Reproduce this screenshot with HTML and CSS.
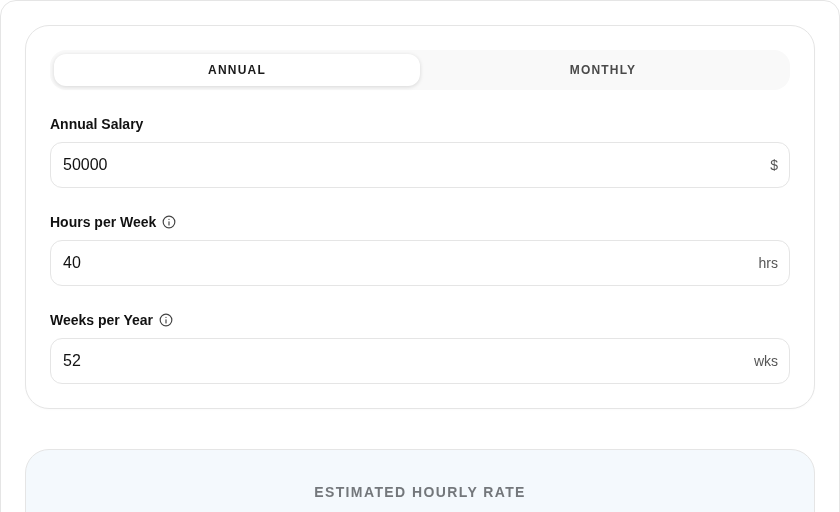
FILE: index.html
```html
<!DOCTYPE html>
<html lang="en">
<head>
<meta charset="utf-8">
<title>Hourly Rate Calculator</title>
<link rel="stylesheet" href="styles.css">
</head>
<body>
<main class="shell">
  <section class="card">
    <div class="toggle">
      <button class="tab tab-active" type="button">ANNUAL</button>
      <button class="tab" type="button">MONTHLY</button>
    </div>
    <div class="field">
      <label class="label">Annual Salary</label>
      <div class="input"><span class="value">50000</span><span class="unit">$</span></div>
    </div>
    <div class="field">
      <label class="label">Hours per Week
        <svg class="info" viewBox="0 0 24 24" aria-hidden="true"><circle cx="12" cy="12" r="10"/><path d="M12 17v-5.5"/><path d="M12 7.5h.01"/></svg>
      </label>
      <div class="input"><span class="value">40</span><span class="unit">hrs</span></div>
    </div>
    <div class="field">
      <label class="label">Weeks per Year
        <svg class="info" viewBox="0 0 24 24" aria-hidden="true"><circle cx="12" cy="12" r="10"/><path d="M12 17v-5.5"/><path d="M12 7.5h.01"/></svg>
      </label>
      <div class="input"><span class="value">52</span><span class="unit">wks</span></div>
    </div>
  </section>
  <section class="result">
    <h2 class="result-title">ESTIMATED HOURLY RATE</h2>
  </section>
</main>
</body>
</html>
```
FILE: styles.css
```css
* { box-sizing: border-box; }
html, body { margin: 0; height: 512px; overflow: hidden; background: #fff; }
body {
  font-family: "Liberation Sans", Arial, sans-serif;
  color: #111;
}
.shell {
  border: 1px solid #e5e5e5;
  border-radius: 16px;
  padding: 24px;
  min-height: 700px;
  background: #fff;
  will-change: transform;
}
.card {
  border: 1px solid #e5e5e5;
  border-radius: 24px;
  padding: 24px;
  background: #fff;
  box-shadow: 0 1px 2px rgba(0,0,0,0.02);
}
.toggle {
  display: flex;
  height: 40px;
  padding: 4px;
  border-radius: 16px;
  background: #f9f9f9;
  margin-bottom: 24px;
}
.tab {
  flex: 1;
  border: 0;
  background: transparent;
  border-radius: 12px;
  font: 700 12px "Liberation Sans", Arial, sans-serif;
  letter-spacing: 1.2px;
  color: #4a4a4a;
  padding: 0;
}
.tab-active {
  background: #fff;
  color: #1a1a1a;
  box-shadow: 0 1px 4px rgba(0,0,0,0.14);
}
.field { margin-bottom: 24px; }
.field:last-child { margin-bottom: 0; }
.label {
  display: flex;
  align-items: center;
  gap: 6px;
  height: 20px;
  margin-bottom: 8px;
  font-size: 14px;
  font-weight: 700;
  line-height: 20px;
  color: #111;
}
.info {
  width: 14px;
  height: 14px;
  fill: none;
  stroke: #444;
  stroke-width: 2;
  stroke-linecap: round;
  stroke-linejoin: round;
}
.input {
  display: flex;
  align-items: center;
  justify-content: space-between;
  height: 46px;
  padding: 0 11px 0 12px;
  border: 1px solid #e5e5e5;
  border-radius: 12px;
  background: #fff;
}
.value { font-size: 16px; color: #111; }
.unit { font-size: 14px; color: #555; }
.result {
  margin-top: 40px;
  padding: 32px;
  min-height: 300px;
  border: 1px solid #e5e5e5;
  border-radius: 24px;
  background: #f4f9fd;
}
.result-title {
  margin: 0;
  font-size: 14px;
  font-weight: 700;
  line-height: 20px;
  letter-spacing: 1.4px;
  text-align: center;
  color: #73777b;
}
```
